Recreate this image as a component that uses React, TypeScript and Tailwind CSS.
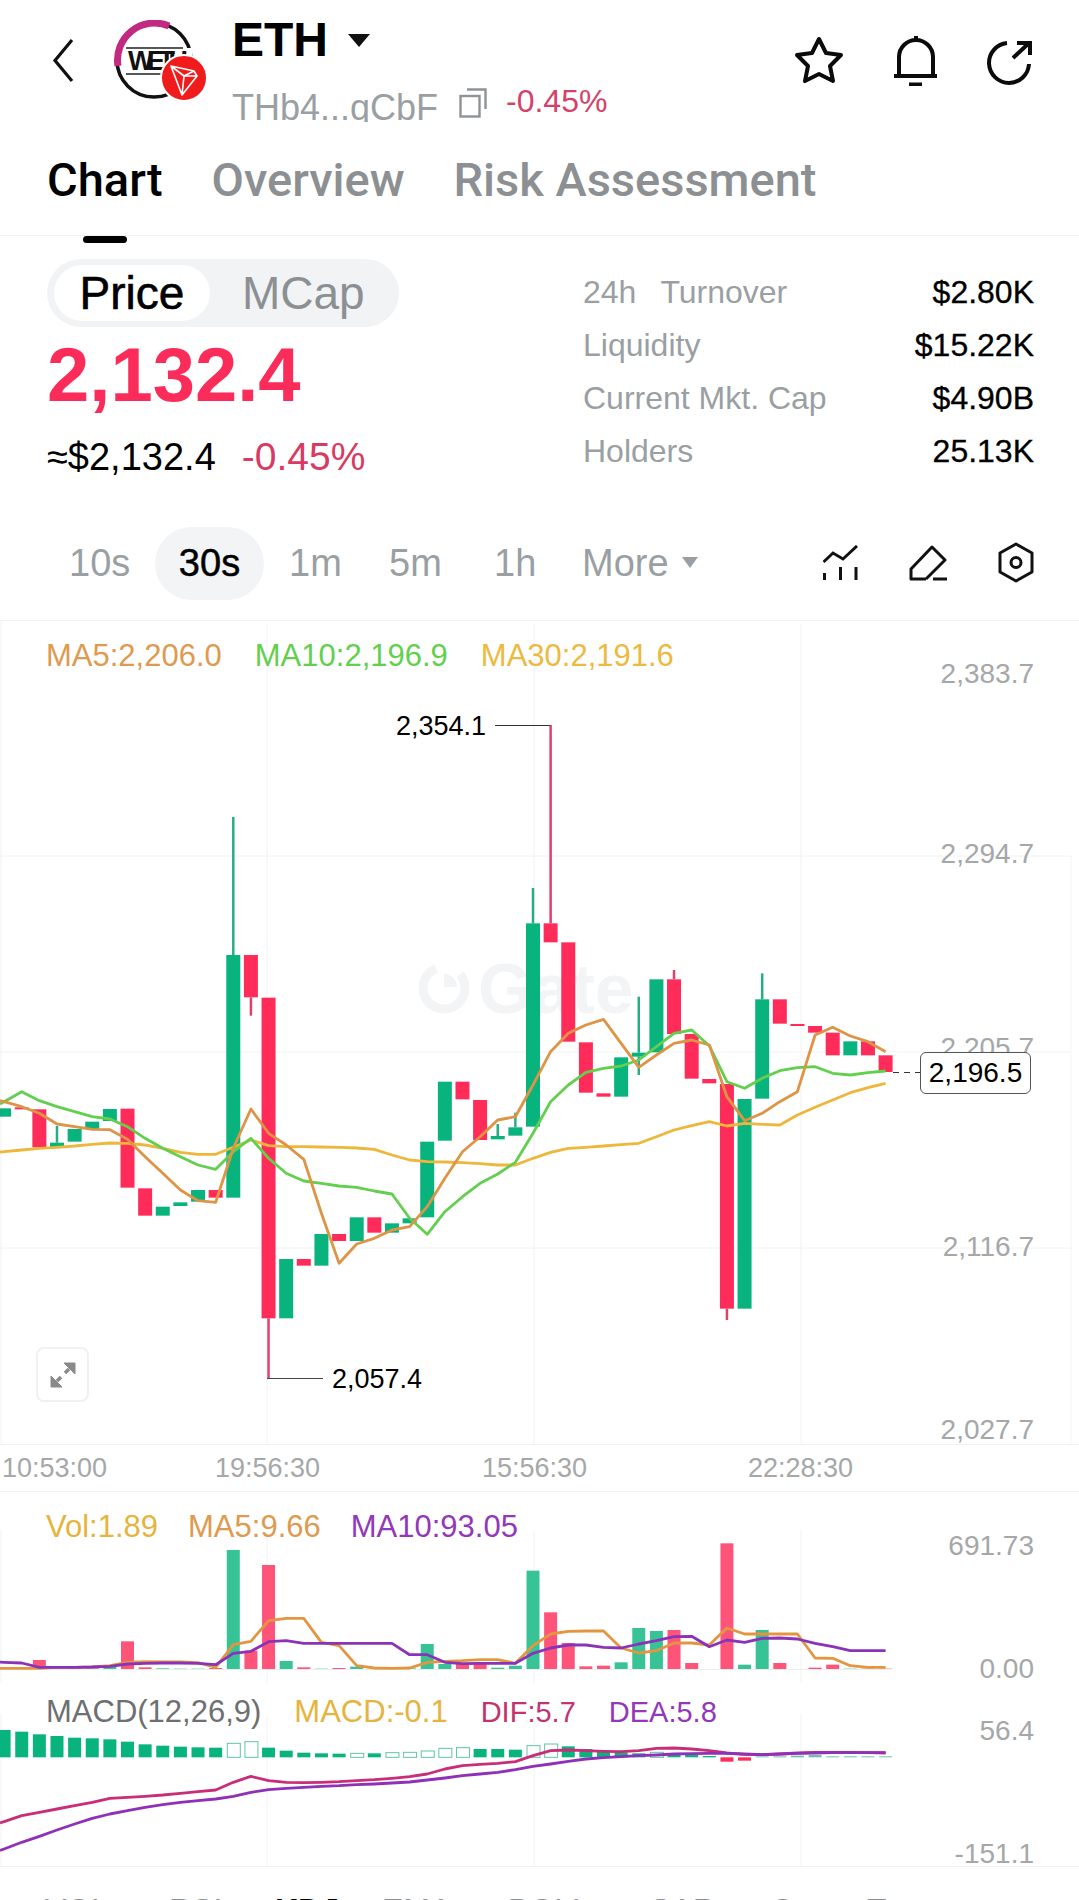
import React from "react";

// zoom-space y helpers: all series below are read off the chart, x is the candle index
const cx = (i: number) => 4.1 + 17.63 * i;
const py = (z: number) => 900 + z / 3;
const ly = (z: number) => 1500 + z / 3;

type Candle = [string, number, number, number?, number?];

const candles: Candle[] = [
  ["g", 625, 650], ["r", 622, 628], ["r", 628, 742], ["g", 728, 742, 678], ["g", 687, 725],
  ["g", 665, 687], ["g", 627, 663], ["r", 626, 863], ["r", 865, 947], ["g", 920, 947],
  ["g", 907, 918], ["g", 870, 905], ["r", 870, 893], ["g", 165, 893, -249], ["r", 165, 292, undefined, 347],
  ["r", 293, 1255, undefined, 1434], ["g", 1077, 1255], ["r", 1077, 1097], ["g", 1002, 1097], ["r", 1002, 1023],
  ["g", 952, 1023], ["r", 952, 998], ["g", 970, 998], ["g", 955, 970], ["g", 725, 952],
  ["g", 545, 722], ["r", 545, 598], ["r", 600, 720], ["g", 708, 718, 672], ["g", 682, 707, 638],
  ["g", 70, 680, -36], ["r", 70, 127, -525], ["r", 127, 425], ["r", 427, 578], ["r", 580, 590],
  ["g", 472, 590], ["g", 458, 470, 290, 525], ["g", 238, 457], ["r", 238, 402, 210], ["r", 402, 536],
  ["r", 537, 550], ["r", 552, 1226, undefined, 1260], ["g", 597, 1226], ["g", 298, 596, 220], ["r", 298, 371],
  ["r", 372, 378], ["r", 378, 398], ["r", 398, 466], ["g", 424, 466], ["r", 424, 466],
  ["r", 466, 516],
];

const ma5 = [605, 620, 640, 672, 680, 688, 689, 718, 770, 820, 870, 902, 907, 745, 627, 700, 735, 778, 940, 1090, 1032, 1015, 990, 980, 920, 835, 755, 710, 660, 650, 555, 455, 400, 375, 358, 430, 502, 465, 430, 420, 435, 590, 662, 640, 605, 575, 405, 382, 408, 425, 455];
const ma10 = [605, 575, 602, 620, 635, 650, 657, 680, 715, 745, 770, 795, 808, 755, 715, 775, 820, 843, 850, 858, 862, 873, 882, 955, 1003, 935, 890, 850, 822, 787, 700, 605, 555, 517, 505, 498, 480, 440, 400, 390, 437, 545, 565, 535, 512, 503, 500, 520, 525, 518, 513];
const ma30 = [755, 750, 745, 742, 738, 733, 729, 730, 735, 745, 757, 763, 763, 742, 720, 737, 740, 740, 741, 742, 744, 748, 765, 780, 785, 786, 788, 791, 795, 795, 775, 757, 745, 742, 738, 734, 730, 710, 690, 677, 665, 678, 670, 673, 675, 645, 622, 600, 578, 563, 550];

const volTop = [510, 509, 483, 505, 507, 508, 503, 427, 505, 508, 509, 509, 507, 153, 455, 198, 486, 505, 509, 507, 503, 510, 510, 508, 435, 495, 495, 490, 506, 500, 215, 340, 432, 502, 500, 490, 387, 396, 393, 492, 510, 133, 497, 393, 492, 510, 506, 497, 509, 509, 509];
const volMa5 = [508, 508, 508, 505, 505, 504, 500, 490, 488, 489, 489, 491, 505, 437, 427, 365, 358, 358, 430, 440, 500, 507, 508, 507, 490, 487, 485, 482, 482, 493, 440, 405, 397, 396, 396, 447, 462, 455, 432, 432, 438, 387, 405, 405, 405, 405, 477, 478, 500, 505, 505];
const volMa10 = [490, 492, 505, 505, 505, 504, 502, 495, 493, 492, 492, 493, 497, 463, 457, 428, 425, 433, 433, 433, 433, 433, 433, 467, 467, 490, 494, 493, 493, 493, 463, 447, 438, 438, 445, 447, 435, 425, 413, 412, 443, 423, 430, 418, 417, 420, 433, 443, 455, 455, 455];

const macdTop = [693, 698, 706, 711, 716, 718, 721, 728, 736, 740, 743, 745, 746, 733, 728, 746, 755, 761, 763, 764, 763, 763, 761, 760, 756, 748, 746, 750, 750, 752, 740, 735, 742, 750, 757, 760, 763, 760, 762, 768, 771, 788, 785, 772, 772, 770, 768, 772, 772, 772, 772];
const hollow = [13, 14, 20, 22, 23, 24, 25, 26, 30, 31, 37];
const dif = [968, 950, 940, 930, 920, 910, 898, 895, 892, 888, 883, 878, 873, 850, 832, 845, 850, 851, 850, 848, 845, 842, 838, 833, 825, 810, 800, 796, 793, 788, 770, 755, 753, 755, 757, 758, 755, 748, 747, 750, 755, 762, 766, 767, 765, 762, 760, 760, 760, 761, 762];
const dea = [1050, 1030, 1012, 993, 975, 958, 945, 935, 925, 917, 910, 905, 900, 892, 880, 872, 868, 865, 862, 860, 857, 855, 852, 849, 843, 837, 830, 825, 820, 812, 802, 795, 787, 780, 776, 773, 770, 768, 765, 764, 763, 763, 765, 767, 765, 763, 762, 761, 761, 761, 761];

const GREEN = "#08b37e";
const RED = "#ff2c5a";

// lines run off the left edge of the chart
const line = (vals: number[], f: (z: number) => number) =>
  `0,${f(vals[0] + (vals[0] - vals[1]) * 0.23).toFixed(1)} ` +
  vals.map((v, i) => `${cx(i).toFixed(1)},${f(v).toFixed(1)}`).join(" ");

const GridV = ({ y1, y2 }: { y1: number; y2: number }) => (
  <>
    {[267, 534, 801].map((x) => (
      <line key={x} x1={x} x2={x} y1={y1} y2={y2} stroke="#f1f2f3" strokeWidth="1" />
    ))}
  </>
);

const PriceChart = () => (
  <svg className="absolute inset-0 w-full h-full" viewBox="0 621 1079 823">
    <line x1="1" x2="1" y1="620" y2="1445" stroke="#f1f2f3" />
    <line x1="1071" x2="1071" y1="856" y2="1445" stroke="#f5f5f6" />
    {[856, 1052, 1248].map((y) => (
      <line key={y} x1="0" x2="1071" y1={y} y2={y} stroke="#f1f2f3" strokeWidth="1" />
    ))}
    <GridV y1={624} y2={1445} />
    <circle cx="444" cy="988" r="21" fill="none" stroke="#f3f4f5" strokeWidth="9" strokeDasharray="105 27" transform="rotate(-40 444 988)" />
    <path d="M444 974 a13 13 0 0 1 13 13 h-13z" fill="#f3f4f5" />
    {candles.map(([c, top, bottom, hi, lo], i) => {
      const col = c === "g" ? GREEN : RED;
      const wick = c === "g" ? "#27ad85" : "#e23f69";
      return (
        <g key={i}>
          {hi !== undefined && <line x1={cx(i)} x2={cx(i)} y1={py(hi)} y2={py(top)} stroke={wick} strokeWidth="2.5" />}
          {lo !== undefined && <line x1={cx(i)} x2={cx(i)} y1={py(bottom)} y2={py(lo)} stroke={wick} strokeWidth="2.5" />}
          <rect x={cx(i) - 7} y={py(top)} width="14" height={py(bottom) - py(top)} fill={col} />
        </g>
      );
    })}
    <polyline points={line(ma30, py)} fill="none" stroke="#eeb63a" strokeWidth="2.8" strokeLinejoin="round" />
    <polyline points={line(ma10, py)} fill="none" stroke="#63cf4e" strokeWidth="2.8" strokeLinejoin="round" />
    <polyline points={line(ma5, py)} fill="none" stroke="#de9445" strokeWidth="2.8" strokeLinejoin="round" />
    <line x1="495" x2="550" y1="725.5" y2="725.5" stroke="#333" strokeWidth="1.2" />
    <line x1="267" x2="323" y1="1378.5" y2="1378.5" stroke="#444" strokeWidth="1.2" />
    <line x1="893" x2="920" y1="1072.5" y2="1072.5" stroke="#333" strokeWidth="1.2" strokeDasharray="6 5" />
  </svg>
);

const VolChart = () => (
  <svg className="absolute inset-0 w-full h-full" viewBox="0 1493 1079 193">
    <GridV y1={1532} y2={1684} />
    <line x1="1" x2="1" y1="1532" y2="1684" stroke="#f1f2f3" />
    <line x1="0" x2="892" y1="1670.5" y2="1670.5" stroke="#eceded" />
    {volTop.map((t, i) => (
      <rect key={i} x={cx(i) - 6.5} y={ly(t)} width="13" height={ly(510) - ly(t)} fill={candles[i][0] === "g" ? "#37c396" : "#ff5479"} />
    ))}
    <polyline points={line(volMa5, ly)} fill="none" stroke="#e3963f" strokeWidth="2.8" strokeLinejoin="round" />
    <polyline points={line(volMa10, ly)} fill="none" stroke="#8b33b8" strokeWidth="2.8" strokeLinejoin="round" />
  </svg>
);

const MacdChart = () => (
  <svg className="absolute inset-0 w-full h-full" viewBox="0 1686 1079 181">
    <GridV y1={1716} y2={1867} />
    <line x1="1" x2="1" y1="1716" y2="1867" stroke="#f1f2f3" />
    {macdTop.map((t, i) => {
      const base = 775;
      const below = t > base;
      const y = below ? ly(base) : ly(t);
      const h = Math.abs(ly(t) - ly(base));
      return hollow.includes(i) ? (
        <rect key={i} x={cx(i) - 6} y={y} width="13" height={h} fill="#fff" stroke="#60c5a4" strokeWidth="1" />
      ) : (
        <rect key={i} x={cx(i) - 6.5} y={y} width="13" height={h} fill={below ? RED : i > 42 ? "#6fbfb0" : GREEN} />
      );
    })}
    <polyline points={line(dif, ly)} fill="none" stroke="#c92d78" strokeWidth="2.8" strokeLinejoin="round" />
    <polyline points={line(dea, ly)} fill="none" stroke="#8f30b8" strokeWidth="2.8" strokeLinejoin="round" />
  </svg>
);

const Logo = () => (
  <svg width="97" height="82" viewBox="0 0 97 82" className="shrink-0">
    <circle cx="41" cy="40" r="37" fill="#fff" stroke="#111" strokeWidth="3.5" />
    <path d="M5 46 A37 37 0 0 1 56 6" fill="none" stroke="#c12a80" strokeWidth="7" />
    <rect x="13" y="28" width="66" height="26" fill="#fff" />
    <path d="M13 28 H70 M13 54 H70" stroke="#222" strokeWidth="1.5" />
    <text x="15" y="50" fontFamily="Liberation Sans, sans-serif" fontWeight="700" fontSize="27" fill="#111" textLength="60">WETH</text>
    <circle cx="71" cy="58" r="23" fill="#f01b1b" stroke="#fff" strokeWidth="2" />
    <path d="M58 46 L81 51 L84 56 L69 75 Z M58 46 L69 75 L71 56 Z M71 56 L81 51 M71 56 L84 56" fill="none" stroke="#fff" strokeWidth="1.6" strokeLinejoin="round" />
  </svg>
);

const Tab = ({ label, active }: { label: string; active?: boolean }) => (
  <div className={active ? "relative text-black" : "relative text-[#8c9093]"}>
    {label}
    {active && <div className="absolute left-[36px] bottom-[-34px] w-[44px] h-[7px] rounded-full bg-black" />}
  </div>
);

const Stat = ({ label, value }: { label: React.ReactNode; value: string }) => (
  <div className="flex items-center justify-between h-[53px]">
    <span className="text-[#9a9fa3] text-[32px]">{label}</span>
    <span className="text-black text-[32px] [-webkit-text-stroke:0.3px_black]">{value}</span>
  </div>
);

const YLabel = ({ className, children }: { className: string; children: string }) => (
  <div className={`absolute right-[45px] text-[28px] leading-[32px] text-[#a5a7a9] ${className}`}>{children}</div>
);

export default function App() {
  return (
    <div className="flex flex-col w-[1079px] h-[1900px] overflow-hidden bg-white font-['Liberation_Sans',sans-serif]">
      {/* top bar */}
      <div className="flex items-start h-[130px] pl-[52px] pr-[47px]">
        <svg width="22" height="45" viewBox="0 0 22 45" className="mt-[38px] shrink-0" fill="none" stroke="#111" strokeWidth="3.2">
          <path d="M20 2 L3 22.5 L20 43" />
        </svg>
        <div className="ml-[39px] mt-[20px]">
          <Logo />
        </div>
        <div className="ml-[22px] flex flex-col">
          <div className="flex items-center h-[60px] mt-[10px]">
            <span className="text-[48px] font-bold leading-none text-black">ETH</span>
            <svg width="22" height="13" viewBox="0 0 22 13" className="ml-[20px]">
              <path d="M0 0 H22 L11 13Z" fill="#111" />
            </svg>
          </div>
          <div className="flex items-start h-[52px]">
            <span className="h-[52px] overflow-hidden text-[36px] leading-[76px] text-[#9a9fa3] w-[208px] block">THb4...qCbF</span>
            <svg width="28" height="30" viewBox="0 0 28 30" className="ml-[19px] mt-[18px]" fill="none" stroke="#8f9396" strokeWidth="2.4">
              <rect x="1.5" y="8" width="19" height="20.5" />
              <path d="M8 1.5 H26.5 V21" />
            </svg>
            <span className="ml-[19px] mt-[11px] text-[32px] leading-[40px] text-[#d4426a]">-0.45%</span>
          </div>
        </div>
        <div className="ml-auto flex items-start gap-[50px] mt-[36px]">
          <svg width="50" height="49" viewBox="0 0 50 49" fill="none" stroke="#0b0b0b" strokeWidth="4" strokeLinejoin="round">
            <path d="M25 3 L32 17 L47 19 L36 30 L39 45 L25 38 L11 45 L14 30 L3 19 L18 17 Z" />
          </svg>
          <svg width="43" height="50" viewBox="0 0 43 50" fill="none" stroke="#0b0b0b" strokeWidth="4">
            <path d="M22 0 V5 M5 40 V21 a17 17 0 0 1 34 0 V40 M0 40 H43 M15 48.5 H28" />
          </svg>
          <svg width="45" height="45" viewBox="0 0 45 45" fill="none" stroke="#0b0b0b" strokeWidth="4" className="mt-[4px]">
            <path d="M20 3 A20 20 0 1 0 42 24 M26 18 L42 3 M30 3 H43 V15" />
          </svg>
        </div>
      </div>

      {/* tabs */}
      <div className="flex items-start h-[106px] pl-[47px] border-b border-[#f0f1f2] pt-[21px] gap-[49px] text-[47px] leading-[58px] font-['Roboto',sans-serif] font-medium">
        <Tab label="Chart" active />
        <Tab label="Overview" />
        <Tab label="Risk Assessment" />
      </div>

      {/* price + stats */}
      <div className="flex justify-between h-[291px] pl-[47px] pr-[45px] pt-[23px]">
        <div className="flex flex-col items-start">
          <div className="flex items-center h-[68px] w-[352px] rounded-full bg-[#f2f3f5] px-[7px]">
            <div className="flex items-center justify-center w-[156px] h-[56px] rounded-full bg-white text-[46px] text-black [-webkit-text-stroke:0.6px_black]">Price</div>
            <div className="ml-[32px] text-[46px] text-[#8c9093]">MCap</div>
          </div>
          <div className="mt-[3px] text-[76px] leading-[90px] font-bold text-[#fb2c59]">2,132.4</div>
          <div className="flex items-center mt-[14px] h-[46px] text-[38px]">
            <span className="text-black">≈$2,132.4</span>
            <span className="ml-[26px] text-[39px] text-[#d93a62]">-0.45%</span>
          </div>
        </div>
        <div className="w-[451px] flex flex-col pt-[6px]">
          <Stat label={<>24h<span className="ml-[24px]">Turnover</span></>} value="$2.80K" />
          <Stat label="Liquidity" value="$15.22K" />
          <Stat label="Current Mkt. Cap" value="$4.90B" />
          <Stat label="Holders" value="25.13K" />
        </div>
      </div>

      {/* intervals */}
      <div className="flex items-start h-[93px] pl-[69px] pr-[45px] text-[38px] text-[#9a9fa3]">
        <div className="flex items-center h-[73px] w-[62px]">10s</div>
        <div className="flex items-center justify-center h-[73px] w-[109px] ml-[24px] rounded-full bg-[#f3f4f6] text-black [-webkit-text-stroke:0.5px_black]">30s</div>
        <div className="flex items-center h-[73px] ml-[25px] w-[55px]">1m</div>
        <div className="flex items-center h-[73px] ml-[45px] w-[57px]">5m</div>
        <div className="flex items-center h-[73px] ml-[48px] w-[43px]">1h</div>
        <div className="flex items-center h-[73px] ml-[45px]">More</div>
        <svg width="16" height="11" viewBox="0 0 16 11" className="ml-[13px] mt-[30px]">
          <path d="M0 0 H16 L8 11Z" fill="#9a9fa3" />
        </svg>
        <div className="ml-auto flex items-start gap-[51px] mt-[18px]">
          <svg width="35" height="36" viewBox="0 0 35 36" fill="none" stroke="#111" strokeWidth="3">
            <path d="M0.5 17 L10 8 L20 14 L34 1 M1.5 28 V35 M17.5 22 V35 M33 22 V35" />
          </svg>
          <svg width="38" height="36" viewBox="0 0 38 36" fill="none" stroke="#111" strokeWidth="3" strokeLinejoin="round">
            <path d="M17 34 H2 V24 L23 2 L36 15 L17 34 M24 34 H38" />
          </svg>
          <svg width="36" height="41" viewBox="0 0 36 41" fill="none" stroke="#111" strokeWidth="3" strokeLinejoin="round" className="-mt-[3px]">
            <path d="M18 2 L34 11 V30 L18 39 L2 30 V11 Z" />
            <circle cx="18" cy="20.5" r="5" />
          </svg>
        </div>
      </div>

      {/* main chart */}
      <div className="relative h-[825px] border-t border-b border-[#f0f1f2]">
        <div className="absolute left-[478px] top-[328px] text-[70px] leading-[80px] font-bold text-[#f3f4f5]">Gate</div>
        <PriceChart />
        <div className="relative flex gap-[33px] pl-[46px] pt-[17px] text-[31px] leading-[36px]">
          <span className="text-[#de9a4e]">MA5:2,206.0</span>
          <span className="text-[#63cf4e]">MA10:2,196.9</span>
          <span className="text-[#ecba3e]">MA30:2,191.6</span>
        </div>
        <YLabel className="top-[37px]">2,383.7</YLabel>
        <YLabel className="top-[217px]">2,294.7</YLabel>
        <YLabel className="top-[411px]">2,205.7</YLabel>
        <YLabel className="top-[610px]">2,116.7</YLabel>
        <YLabel className="top-[793px]">2,027.7</YLabel>
        <div className="absolute left-[396px] top-[89px] text-[27px] leading-[32px] text-black">2,354.1</div>
        <div className="absolute left-[332px] top-[742px] text-[27px] leading-[32px] text-black">2,057.4</div>
        <div className="absolute left-[920px] top-[431px] flex items-center justify-center w-[111px] h-[42px] rounded-[6px] border border-[#555] bg-white text-[28px] text-black">2,196.5</div>
        <div className="absolute left-[36px] top-[726px] flex items-center justify-center w-[53px] h-[55px] rounded-[8px] border-2 border-[#f1f1f2] bg-white">
          <svg width="26" height="26" viewBox="0 0 26 26" fill="#8a8a8a" stroke="#8a8a8a">
            <path d="M14 1 H25 V12 Z" />
            <path d="M1 25 V14 L12 25 Z" />
            <path d="M19 7 L15 11 M7 19 L11 15" strokeWidth="3.5" />
          </svg>
        </div>
      </div>

      {/* time axis */}
      <div className="flex items-center h-[47px] pl-[2px] border-b border-[#f0f1f2] text-[27px] text-[#a5a7a9]">
        <span className="w-[105px]">10:53:00</span>
        <span className="w-[105px] ml-[108px] text-center">19:56:30</span>
        <span className="w-[105px] ml-[162px] text-center">15:56:30</span>
        <span className="w-[105px] ml-[161px] text-center">22:28:30</span>
      </div>

      {/* volume */}
      <div className="relative h-[193px]">
        <VolChart />
        <div className="relative flex gap-[30px] pl-[46px] pt-[17px] text-[31px] leading-[36px]">
          <span className="text-[#e6b43e]">Vol:1.89</span>
          <span className="text-[#de9a4e]">MA5:9.66</span>
          <span className="text-[#9238b8]">MA10:93.05</span>
        </div>
        <YLabel className="top-[38px]">691.73</YLabel>
        <YLabel className="top-[161px]">0.00</YLabel>
      </div>

      {/* macd */}
      <div className="relative h-[182px] border-b border-[#f0f1f2]">
        <MacdChart />
        <div className="relative flex items-center gap-[33px] pl-[46px] pt-[9px] text-[31px] leading-[36px]">
          <span className="text-[#6d6f72]">MACD(12,26,9)</span>
          <span className="text-[#e6b43e]">MACD:-0.1</span>
          <span className="text-[29px] text-[#c2346f]">DIF:5.7</span>
          <span className="text-[29px] text-[#9238b8]">DEA:5.8</span>
        </div>
        <YLabel className="top-[30px]">56.4</YLabel>
        <YLabel className="top-[153px]">-151.1</YLabel>
      </div>

      {/* indicator tabs, cut off by the bottom edge */}
      <div className="flex h-[33px] pt-[25px] pl-[45px] text-[32px] leading-[36px] text-[#8c9093]">
        <span className="w-[124px]">VOL</span>
        <span className="w-[106px]">RSI</span>
        <span className="w-[107px] font-bold text-black">KDJ</span>
        <span className="w-[126px]">EMA</span>
        <span className="w-[142px]">BOLL</span>
        <span className="w-[120px]">SAR</span>
        <span className="w-[97px]">Cr</span>
        <span>Tag</span>
      </div>
    </div>
  );
}
